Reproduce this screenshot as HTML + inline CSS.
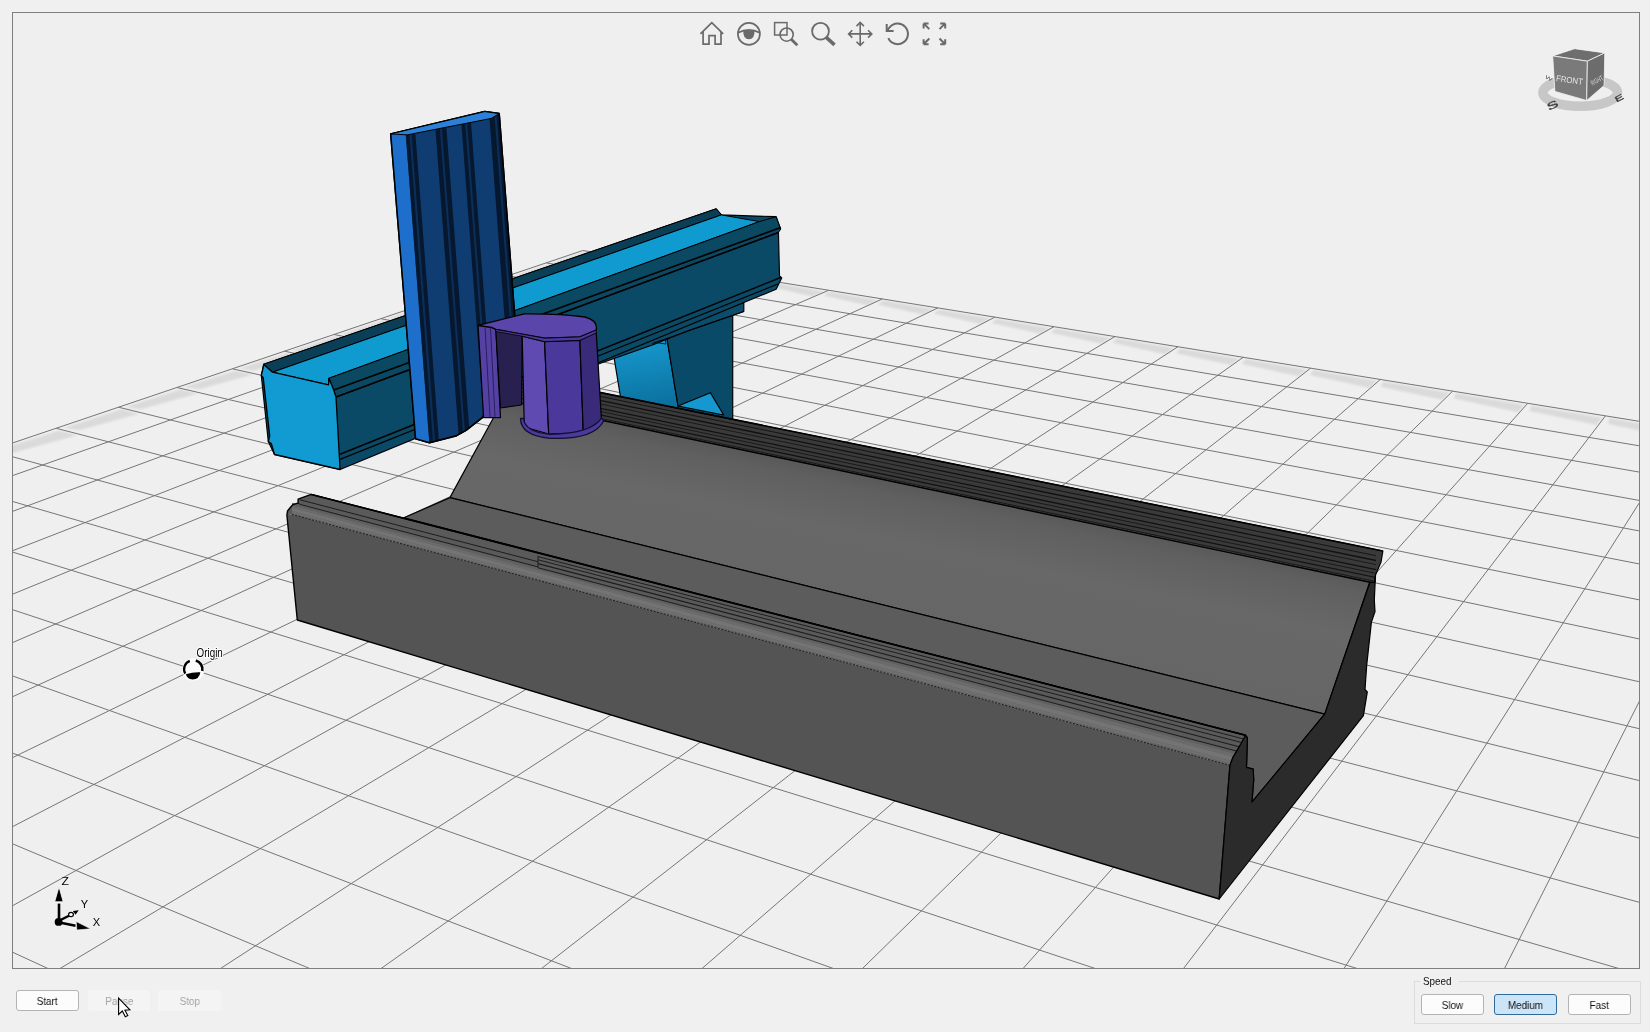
<!DOCTYPE html>
<html><head><meta charset="utf-8"><style>
html,body{margin:0;padding:0;}
body{width:1650px;height:1032px;background:#f0f0f0;position:relative;overflow:hidden;font-family:"Liberation Sans",sans-serif;}
#vp{position:absolute;left:12px;top:12px;width:1626px;height:955px;border:1px solid #7f7f7f;background:#efefef;overflow:hidden;}
svg{position:absolute;left:0;top:0;}
g.tx{opacity:0.995;}
.btn span{will-change:transform;}
.btn{position:absolute;height:19px;border:1px solid #b4b4b4;border-radius:3px;background:#fcfcfc;font-size:11.5px;line-height:20px;text-align:center;color:#111;box-sizing:content-box;}
.btn span{display:inline-block;transform:scaleX(0.86);}
.dis{border-color:transparent;background:#f4f4f4;color:#a3a3a3;}
.sel{background:#cce4f7;border-color:#2f6a9b;}
</style></head><body>
<div id="vp"></div>
<svg width="1650" height="1032" viewBox="0 0 1650 1032">
<defs><clipPath id="cp"><rect x="13" y="13" width="1626" height="955"/></clipPath></defs>
<g clip-path="url(#cp)">
<filter id="bl"><feGaussianBlur stdDeviation="1.2"/></filter><path d="M583.1 251.8 L624.7 259.1 L612.2 263.5 L575.9 255.2ZM629.5 259.3 L672.4 266.9 L660.2 271.4 L622.6 262.8ZM677.3 267.1 L721.6 274.8 L709.5 279.5 L670.6 270.6ZM726.6 275.1 L772.2 283.0 L760.4 287.8 L720.0 278.7ZM777.3 283.3 L824.3 291.5 L812.8 296.4 L771.0 287.1ZM829.5 291.8 L878.1 300.2 L866.9 305.3 L823.5 295.6ZM883.4 300.5 L933.6 309.2 L922.7 314.5 L877.7 304.5ZM939.0 309.5 L990.8 318.5 L980.3 323.9 L933.6 313.6ZM996.4 318.8 L1049.9 328.1 L1039.8 333.7 L991.3 323.0ZM1055.6 328.4 L1111.0 338.0 L1101.3 343.8 L1050.8 332.8ZM1116.8 338.3 L1174.1 348.2 L1164.8 354.2 L1112.4 342.8ZM1180.0 348.5 L1239.4 358.8 L1230.6 365.0 L1176.0 353.2ZM1245.4 359.1 L1306.9 369.8 L1298.6 376.2 L1241.9 364.0ZM1313.1 370.1 L1376.8 381.1 L1369.1 387.8 L1310.0 375.1ZM1383.2 381.5 L1449.3 392.8 L1442.2 399.7 L1380.6 386.7ZM1455.8 393.2 L1524.4 405.0 L1518.0 412.2 L1453.8 398.6ZM1531.0 405.4 L1602.3 417.7 L1596.6 425.1 L1529.6 411.0ZM1609.1 418.1 L1683.2 430.8 L1678.2 438.5 L1608.3 423.9ZM1690.2 431.2 L1767.2 444.4 L1763.1 452.4 L1690.1 437.2ZM1774.4 444.8 L1854.5 458.6 L1851.4 466.9 L1775.0 451.1ZM1861.9 459.0 L1945.4 473.3 L1943.2 482.0 L1863.3 465.6ZM551.7 262.7 L586.0 251.8 L602.1 254.4 L564.8 264.1ZM513.6 275.6 L549.4 264.2 L565.7 266.9 L526.9 277.1ZM473.5 289.1 L511.0 277.2 L527.6 280.0 L487.0 290.7ZM431.4 303.4 L470.8 290.8 L487.5 293.8 L445.1 305.1ZM387.1 318.4 L428.5 305.1 L445.4 308.3 L401.1 320.2ZM340.4 334.2 L384.0 320.2 L401.1 323.6 L354.6 336.1ZM291.1 350.9 L337.1 336.1 L354.4 339.7 L305.6 352.8ZM239.1 368.5 L287.6 352.9 L305.0 356.6 L253.8 370.6ZM184.0 387.1 L235.2 370.7 L252.9 374.6 L199.0 389.3ZM125.7 406.9 L179.9 389.4 L197.7 393.6 L140.9 409.2ZM63.7 427.9 L121.2 409.3 L139.2 413.7 L79.2 430.3ZM-2.2 450.2 L58.8 430.5 L77.0 435.2 L13.5 452.8ZM-72.5 474.0 L-7.5 452.9 L10.8 458.0 L-56.5 476.8ZM-147.5 499.4 L-78.2 476.9 L-59.9 482.3 L-131.3 502.4ZM-227.9 526.6 L-153.8 502.5 L-135.3 508.3 L-211.4 529.8ZM-314.1 555.8 L-234.7 530.0 L-216.2 536.1 L-297.4 559.2ZM-406.9 587.2 L-321.5 559.4 L-303.1 566.0 L-390.0 590.9ZM-507.0 621.1 L-415.0 591.1 L-396.6 598.2 L-489.8 625.1ZM-615.3 657.8 L-515.9 625.3 L-497.6 633.0 L-597.9 662.1ZM-732.9 697.6 L-625.1 662.3 L-607.1 670.7 L-715.4 702.3ZM-861.0 741.0 L-743.7 702.5 L-726.0 711.6 L-843.3 746.1Z" fill="#dadada" filter="url(#bl)"/>
<path d="M582.8 250.5L-872.5 741.7M629.2 258.0L-822.4 770.3M676.8 265.7L-769.5 800.6M725.9 273.7L-713.4 832.7M776.5 281.8L-653.8 866.7M828.6 290.3L-590.4 902.9M882.4 298.9L-522.8 941.6M937.8 307.9L-450.7 982.8M994.9 317.1L-373.5 1026.9M1054.0 326.7L-290.6 1074.3M1115.0 336.5L-201.5 1125.2M1178.0 346.7L-105.3 1180.1M1243.2 357.3L-1.3 1239.6M1310.6 368.2L111.6 1304.1M1380.4 379.4L234.6 1374.4M1452.7 391.1L369.0 1451.2M1527.7 403.3L516.7 1535.6M1605.5 415.8L679.5 1628.6M1686.2 428.9L860.0 1731.8M1770.0 442.4L1061.3 1846.8M1857.2 456.5L1287.0 1975.8M1947.8 471.2L1542.1 2121.5M582.8 250.5L1947.8 471.2M546.3 262.9L1941.6 496.4M507.9 275.8L1935.0 523.4M467.7 289.4L1927.9 552.4M425.4 303.7L1920.2 583.5M380.9 318.7L1912.0 617.1M334.1 334.5L1903.0 653.5M284.6 351.2L1893.3 692.9M232.4 368.8L1882.8 735.9M177.1 387.5L1871.2 782.8M118.5 407.2L1858.5 834.4M56.3 428.3L1844.6 891.3M-9.9 450.6L1829.1 954.3M-80.5 474.4L1811.8 1024.6M-155.9 499.9L1792.4 1103.3M-236.6 527.1L1770.5 1192.3M-323.2 556.3L1745.6 1293.6M-416.3 587.8L1717.0 1410.0M-516.9 621.7L1683.8 1545.0M-625.7 658.4L1644.8 1703.6M-743.8 698.3L1598.4 1892.6M-872.5 741.7L1542.1 2121.5" stroke="#767676" stroke-width="1" fill="none"/>
<linearGradient id="lgl" gradientUnits="userSpaceOnUse" x1="640" y1="345" x2="650" y2="405"><stop offset="0" stop-color="#1695ca"/><stop offset="1" stop-color="#0b72a0"/></linearGradient>
<polygon points="612.0,345.0 652.4,336.0 666.9,338.0 679.0,412.0 621.0,400.0" fill="url(#lgl)" stroke="#000" stroke-width="1.2" stroke-linejoin="round" />
<polygon points="652.0,342.0 664.5,336.5 666.0,344.0" fill="#1598cf" stroke="#000" stroke-width="0.8" stroke-linejoin="round" />
<polygon points="666.9,338.0 732.7,305.0 732.7,422.0 679.0,412.0" fill="#0a4a69" stroke="#000" stroke-width="1.2" stroke-linejoin="round" />
<polygon points="678.0,406.0 710.4,392.8 723.7,415.0" fill="#1598cf" stroke="#000" stroke-width="1.2" stroke-linejoin="round" />
<polygon points="598.4,351.1 743.8,302.6 743.8,311.5 690.0,330.0 652.4,345.0 598.4,364.0" fill="#0b4d6b" stroke="#000" stroke-width="1.2" stroke-linejoin="round" />
<polyline points="652.4,343.5 743.8,311.5" fill="none" stroke="#000" stroke-width="1" />
<polygon points="263.8,364.2 716.2,208.8 721.4,214.9 776.1,216.7 780.6,229.0 778.4,231.2 779.5,275.8 781.7,278.0 776.1,289.2 340.1,469.5 274.5,454.5 268.3,441.5 261.3,375.5" fill="#0b4a66" stroke="#000" stroke-width="1.2" stroke-linejoin="round" />
<polygon points="263.8,364.2 716.2,208.8 721.4,214.9 272.5,372.2" fill="#0b3f58" stroke="#000" stroke-width="1" stroke-linejoin="round" />
<polygon points="272.5,372.2 721.4,214.9 759.4,221.6 328.5,378.4 328.5,384.8" fill="#0f9ad0" stroke="#000" stroke-width="1" stroke-linejoin="round" />
<polygon points="328.5,378.4 759.4,221.6 776.1,216.7 780.6,229.0 778.4,232.5 336.0,397.0 333.7,390.0" fill="#0b4862" stroke="#000" stroke-width="1" stroke-linejoin="round" />
<polyline points="333.7,390.0 780.6,227.6" fill="none" stroke="#000" stroke-width="1.6" />
<polyline points="336.0,397.0 778.4,232.5" fill="none" stroke="#000" stroke-width="1.6" />
<polyline points="340.0,454.3 781.2,277.3" fill="none" stroke="#000" stroke-width="1.5" />
<polyline points="340.0,459.4 778.0,284.0" fill="none" stroke="#000" stroke-width="1.2" />
<polygon points="263.8,364.5 272.5,372.2 328.5,384.8 329.1,378.4 333.7,390.0 336.0,397.0 340.1,469.5 274.5,454.5 271.3,443.5 268.3,441.5 269.7,436.0 263.2,377.5 261.3,375.5 262.4,371.0" fill="#119bd2" stroke="#000" stroke-width="1.3" stroke-linejoin="round" />
<polygon points="503.0,372.8 1382.9,551.0 1381.0,562.1 1375.5,575.0 1374.6,582.4 1370.0,582.4 503.3,399.7" fill="#3a3a3a" stroke="#000" stroke-width="1.2" stroke-linejoin="round" />
<polyline points="503.0,376.4 1376.0,555.7" fill="none" stroke="#151515" stroke-width="1.0" />
<polyline points="503.0,380.4 1376.0,560.5" fill="none" stroke="#111" stroke-width="1.3" />
<polyline points="503.0,383.8 1376.0,564.6" fill="none" stroke="#1a1a1a" stroke-width="1.0" />
<polyline points="503.0,388.0 1376.0,569.7" fill="none" stroke="#111" stroke-width="1.3" />
<polyline points="503.0,391.1 1376.0,573.4" fill="none" stroke="#1a1a1a" stroke-width="1.0" />
<polyline points="503.0,394.5 1376.0,577.5" fill="none" stroke="#111" stroke-width="1.2" />
<polyline points="503.0,397.9 1376.0,581.6" fill="none" stroke="#1a1a1a" stroke-width="1.0" />
<polyline points="503.0,372.8 1382.9,551.0" fill="none" stroke="#000" stroke-width="1.6" />
<linearGradient id="slg" gradientUnits="userSpaceOnUse" x1="900" y1="483" x2="874" y2="609"><stop offset="0" stop-color="#595959"/><stop offset="0.12" stop-color="#606060"/><stop offset="0.45" stop-color="#686868"/><stop offset="1" stop-color="#666666"/></linearGradient>
<polygon points="449.9,497.6 492.1,420.2 503.3,399.7 1370.0,582.4 1369.6,582.4 1324.7,714.2" fill="url(#slg)" stroke="#000" stroke-width="1.2" stroke-linejoin="round" />
<polygon points="403.9,517.8 449.9,497.6 1324.7,714.2 1280.0,768.5 1251.9,802.2 1253.7,780.0 1253.2,769.2 1246.5,767.3 1247.4,738.2 1245.5,735.3" fill="#5c5c5c" stroke="#000" stroke-width="1.2" stroke-linejoin="round" />
<polygon points="286.9,515.2 291.8,514.5 1230.0,765.4 1219.2,899.0 297.3,620.0" fill="#545454" />
<polygon points="286.9,515.2 287.5,511.0 290.3,507.5 293.0,504.5 298.1,503.1 298.1,499.2 311.2,494.4 1245.5,735.3 1247.4,738.2 1239.7,746.0 1232.9,757.6 1230.0,765.4 291.8,514.5" fill="#5a5a5a" />
<polygon points="292.0,503.1 1236.0,751.0 1236.0,754.0 292.0,505.3" fill="#616161" />
<polygon points="292.0,505.3 1236.0,754.0 1236.0,757.4 292.0,507.7" fill="#6b6b6b" />
<polygon points="292.0,507.7 1236.0,757.4 1236.0,762.2 292.0,511.1" fill="#747474" />
<polygon points="292.0,511.1 1236.0,762.2 1236.0,765.3 292.0,513.3" fill="#6f6f6f" />
<polygon points="292.0,513.3 1236.0,765.3 1236.0,767.0 292.0,514.6" fill="#666666" />
<polyline points="538.0,556.6 1243.0,738.8" fill="none" stroke="#1e1e1e" stroke-width="1.0" />
<polyline points="538.0,559.8 1243.0,742.9" fill="none" stroke="#1e1e1e" stroke-width="1.0" />
<polyline points="538.0,563.6 1243.0,747.7" fill="none" stroke="#1e1e1e" stroke-width="1.1" />
<polyline points="538.0,567.7 1243.0,752.8" fill="none" stroke="#1e1e1e" stroke-width="1.1" />
<polyline points="300.0,499.8 538.0,561.7" fill="none" stroke="#1e1e1e" stroke-width="1.0" />
<polyline points="300.0,504.4 538.0,566.9" fill="none" stroke="#1e1e1e" stroke-width="1.0" />
<polyline points="538.0,556.1 538.0,567.7" fill="none" stroke="#1e1e1e" stroke-width="1.0" />
<polyline points="311.2,494.4 1245.5,735.3" fill="none" stroke="#000" stroke-width="1.6" />
<polyline points="298.1,503.1 300.5,504.5" fill="none" stroke="#222" stroke-width="1" />
<polyline points="291.8,514.5 1230.0,765.4" fill="none" stroke="#1a1a1a" stroke-width="1" stroke-dasharray="2 1.5"/>
<polygon points="286.9,515.2 287.5,511.0 290.3,507.5 293.0,504.5 298.1,503.1 298.1,499.2 311.2,494.4 1245.5,735.3 1247.4,738.2 1239.7,746.0 1232.9,757.6 1230.0,765.4 1219.2,899.0 297.3,620.0" fill="none" stroke="#000" stroke-width="1.4" stroke-linejoin="round" />
<polygon points="1219.2,899.0 1230.0,765.4 1232.9,757.6 1239.7,746.0 1245.5,735.3 1247.4,738.2 1246.5,767.3 1253.2,769.2 1253.7,780.0 1251.9,802.2 1324.7,714.2 1370.0,582.4 1374.6,582.4 1375.5,575.0 1374.3,600.0 1375.0,611.6 1371.4,622.1 1366.7,665.1 1365.0,689.5 1367.3,691.9 1363.4,715.6" fill="#2b2b2b" stroke="#000" stroke-width="1.2" stroke-linejoin="round" />
<clipPath id="colclip"><polygon points="390.7,133.9 484.7,111.6 499.2,113.6 515.8,330.0 483.0,417.1 466.0,430.3 456.6,435.7 429.5,442.7 415.6,438.8"/></clipPath>
<polygon points="390.7,133.9 484.7,111.6 499.2,113.6 515.8,330.0 483.0,417.1 466.0,430.3 456.6,435.7 429.5,442.7 415.6,438.8" fill="#0f3c71" stroke="#000" stroke-width="1.5" stroke-linejoin="round" />
<g clip-path="url(#colclip)">
<polygon points="388.3,100.0 403.1,100.0 429.9,450.0 415.2,450.0" fill="#1e6fcb" />
<polygon points="403.1,100.0 412.8,100.0 439.6,450.0 429.9,450.0" fill="#06182f" />
<polyline points="407.9,100.0 434.7,450.0" fill="none" stroke="#0c2f5a" stroke-width="2" />
<polygon points="433.2,100.0 444.3,100.0 470.9,450.0 459.8,450.0" fill="#06182f" />
<polyline points="438.7,100.0 465.3,450.0" fill="none" stroke="#0c2f5a" stroke-width="2" />
<polygon points="459.6,100.0 469.3,100.0 495.7,450.0 486.1,450.0" fill="#06182f" />
<polyline points="464.4,100.0 490.9,450.0" fill="none" stroke="#0c2f5a" stroke-width="2" />
<polygon points="488.1,100.0 500.7,100.0 526.9,450.0 514.5,450.0" fill="#06182f" />
<polyline points="494.4,100.0 520.7,450.0" fill="none" stroke="#0c2f5a" stroke-width="2" />
</g>
<polygon points="390.7,133.9 484.7,111.6 499.2,113.6 515.8,330.0 483.0,417.1 466.0,430.3 456.6,435.7 429.5,442.7 415.6,438.8" fill="none" stroke="#000" stroke-width="1.5" stroke-linejoin="round" />
<polygon points="390.7,133.9 484.7,111.6 499.2,113.6 491.4,118.4 407.1,134.9" fill="#2b80d8" stroke="#000" stroke-width="1" stroke-linejoin="round" />
<polygon points="478.1,325.3 491.7,327.4 495.8,329.4 500.5,417.6 483.6,417.6" fill="#5541a3" stroke="#000" stroke-width="1.2" stroke-linejoin="round" />
<polyline points="485.0,327.0 490.0,417.0" fill="none" stroke="#2a1f60" stroke-width="1" />
<polyline points="490.5,328.0 495.0,417.0" fill="none" stroke="#2a1f60" stroke-width="1" />
<polygon points="495.8,329.4 522.2,334.0 521.5,405.0 500.5,408.0" fill="#28204f" stroke="#000" stroke-width="1" stroke-linejoin="round" />
<polygon points="522.2,336.2 544.6,341.6 548.7,434.0 524.3,427.0" fill="#5f4ab2" stroke="#000" stroke-width="1.2" stroke-linejoin="round" />
<polygon points="544.6,341.6 579.9,340.3 583.3,432.5 548.7,434.0" fill="#4a399a" stroke="#000" stroke-width="1.2" stroke-linejoin="round" />
<polygon points="579.9,340.3 596.2,332.1 601.5,420.3 583.3,432.5" fill="#392b7a" stroke="#000" stroke-width="1.2" stroke-linejoin="round" />
<path d="M520.5 418.5 Q520.5 435.5 550 438.3 Q594 440 603.6 421 L601.5 418 Q592 433.5 550 434.3 Q525 432 523.5 418.5 Z" fill="#4a3a9a" stroke="#140e33" stroke-width="1.3"/>
<path d="M478.1 325.3 L524.3 313.8 Q560 313.5 585 317 Q596.5 320 596.5 328 L596.2 330.1 L579.9 336.9 L544.6 338.2 L495.8 329.4 L491.7 327.4 Z" fill="#5a46aa" stroke="#000" stroke-width="1.3" stroke-linejoin="round"/>
<polygon points="495.8,329.4 544.6,338.2 579.9,336.9 596.2,330.1 596.2,333.0 579.9,340.3 544.6,341.6 522.2,336.2 495.8,331.5" fill="#4c3a9a" stroke="#000" stroke-width="0.8" stroke-linejoin="round" />

<g fill="none" stroke="#6a6a6a" stroke-width="1.7">
<path d="M700.4 33.8 L711.8 22.6 L723.2 33.8 M703.1 31.6 V44.2 H709 V35.7 H715.1 V44.2 H721 V31.6" stroke-linejoin="miter"/>
<circle cx="748.9" cy="33.9" r="11"/>
<path d="M738 32.8 Q748.9 26.8 759.8 32.8" stroke-width="1.7"/>
<path d="M743.2 30.2 Q743 39.3 748.9 39.3 Q754.8 39.3 754.6 30.2 Z" fill="#6a6a6a" stroke="none"/>
<rect x="774.6" y="22.6" width="12.4" height="12.4" stroke-width="1.5"/>
<circle cx="786.6" cy="34.6" r="6.6" stroke-width="1.6"/>
<path d="M791 39 L797.3 45.3" stroke-width="2.8"/>
<circle cx="820.5" cy="31.2" r="8.4" stroke-width="1.8"/>
<path d="M826 37.1 L834.5 44.8" stroke-width="3.6"/>
<path d="M848.6 33.9 H871.8 M860.2 22.4 V45.4 M852.3 30.2 L848.6 33.9 L852.3 37.6 M868.1 30.2 L871.8 33.9 L868.1 37.6 M856.5 26.1 L860.2 22.4 L863.9 26.1 M856.5 41.7 L860.2 45.4 L863.9 41.7" stroke-width="1.6"/>
<path d="M887 30.6 L889.6 27.4 A10.3 10.3 0 1 1 888.3 38.2" stroke-width="2"/>
<path d="M886.7 23.9 V30.9 H893.6" stroke-width="2"/>
<path d="M923.6 23.4 H928.6 M923.6 23.4 V28.4 M923.6 23.4 L929.3 29.1 M945.2 23.4 H940.2 M945.2 23.4 V28.4 M945.2 23.4 L939.5 29.1 M923.6 44.2 H928.6 M923.6 44.2 V39.2 M923.6 44.2 L929.3 38.5 M945.2 44.2 H940.2 M945.2 44.2 V39.2 M945.2 44.2 L939.5 38.5" stroke-width="2"/>
</g>
<!-- view cube -->
<g>
<ellipse cx="1580.2" cy="92.6" rx="37.3" ry="13.7" fill="none" stroke="#c7c7c8" stroke-width="9.5"/>
<polygon points="1552.7,55.9 1574.6,48.7 1604.8,52.9 1587.4,61.2" fill="#6e6e6e" stroke="#f4f4f4" stroke-width="0.8"/>
<polygon points="1552.7,55.9 1587.4,61.2 1586.7,100.5 1554.9,91.4" fill="#7a7a7a" stroke="#f4f4f4" stroke-width="0.8"/>
<polygon points="1587.4,61.2 1604.8,52.9 1604.1,85.4 1586.7,100.5" fill="#6c6c6c" stroke="#f4f4f4" stroke-width="0.8"/>
<g class="tx"><text x="1556" y="83" font-size="8.5" fill="#e8e8e8" transform="rotate(8 1570 80)" font-family="Liberation Sans" textLength="27" lengthAdjust="spacingAndGlyphs">FRONT</text>
<text x="1589" y="83" font-size="7" fill="#dcdcdc" transform="rotate(-28 1596 78)" font-family="Liberation Sans" textLength="13" lengthAdjust="spacingAndGlyphs">RIGHT</text>
<text x="-5" y="4.2" font-size="13" fill="#3c3c3c" font-family="Liberation Sans" stroke="#3c3c3c" stroke-width="0.5" transform="translate(1553.5 105) rotate(-26) scale(1.3 0.78)">S</text>
<text x="-4" y="4" font-size="11" fill="#3c3c3c" font-family="Liberation Sans" stroke="#3c3c3c" stroke-width="0.4" transform="translate(1619.5 97.8) rotate(-28) scale(1.2 0.72)">E</text>
<text x="-3" y="2.5" font-size="7" fill="#555" font-family="Liberation Sans" transform="translate(1548.5 78) rotate(28) scale(1.1 0.7)">W</text></g>
</g>
<!-- origin marker -->
<g>
<circle cx="193.3" cy="669.6" r="11" fill="#ffffff"/>
<circle cx="193.3" cy="669.6" r="9.3" fill="#fbfbfb"/>
<path d="M189.8 660.9 A9 9 0 0 0 185.2 673.6" fill="none" stroke="#000" stroke-width="2.3"/>
<path d="M195.8 660.6 A9 9 0 0 1 202.3 671" fill="none" stroke="#000" stroke-width="2.6"/>
<path d="M185.8 674.3 Q193 671.8 200.3 672.2 Q199.5 679.3 192.5 679.4 Q187 679 185.8 674.3 Z" fill="#000"/>
<g class="tx"><text transform="translate(196.6 657) scale(0.82 1)" font-size="12" fill="#000" stroke="#fff" stroke-width="2.2" paint-order="stroke" font-family="Liberation Sans">Origin</text></g>
</g>
<!-- axis triad -->
<g>
<path d="M59 886.8 L63.2 901.8 L54.7 901.8 Z" fill="#000" stroke="#fff" stroke-width="0.8"/>
<path d="M59 903.6 V919" stroke="#000" stroke-width="2.6"/>
<path d="M59.5 922.5 L75.5 925.8" stroke="#000" stroke-width="2.6"/>
<path d="M90.6 928.8 L76.2 921.6 L76.8 930 Z" fill="#000" stroke="#fff" stroke-width="0.6"/>
<path d="M59.5 920.5 L69.5 915.5" stroke="#000" stroke-width="2.4"/>
<ellipse cx="71" cy="914.5" rx="2.4" ry="2.2" fill="#fff" stroke="#000" stroke-width="1.2"/>
<path d="M72.9 911 L78.8 910.3 L75.5 914.8 Z" fill="#000"/>
<circle cx="58.6" cy="921.9" r="3.9" fill="#000"/>
<g class="tx"><text x="61.5" y="885" font-size="10" fill="#000" font-family="Liberation Sans" textLength="7.4" lengthAdjust="spacingAndGlyphs">Z</text>
<text x="80.8" y="908" font-size="10" fill="#000" font-family="Liberation Sans" textLength="7.4" lengthAdjust="spacingAndGlyphs">Y</text>
<text x="92.8" y="926" font-size="10" fill="#000" font-family="Liberation Sans" textLength="7.4" lengthAdjust="spacingAndGlyphs">X</text></g>
</g>

</g>
</svg>
<div class="btn" style="left:16px;top:990px;width:61px;"><span>Start</span></div>
<div class="btn dis" style="left:88px;top:990px;width:60px;"><span>Pause</span></div>
<div class="btn dis" style="left:158px;top:990px;width:61px;"><span>Stop</span></div>
<div style="position:absolute;left:1414px;top:981px;width:225px;height:41px;border:1px solid #dcdcdc;border-top-color:#dcdcdc;"></div>
<div style="position:absolute;left:1420px;top:975px;padding:0 3px;background:#f0f0f0;font-size:11.5px;color:#111;"><span style="display:inline-block;transform:scaleX(0.86);transform-origin:left">Speed</span></div>
<div class="btn" style="left:1421px;top:994px;width:61px;"><span>Slow</span></div>
<div class="btn sel" style="left:1494px;top:994px;width:61px;"><span>Medium</span></div>
<div class="btn" style="left:1568px;top:994px;width:61px;"><span>Fast</span></div>
<svg width="1650" height="1032" style="position:absolute;left:0;top:0;pointer-events:none"><path d="M118.6 998.2 V1014.4 L122.3 1011 L125.3 1016.8 L127.8 1015.5 L124.9 1010.3 L129.9 1009.9 Z" fill="#fff" stroke="#000" stroke-width="1.1" stroke-linejoin="miter"/></svg>
</body></html>
